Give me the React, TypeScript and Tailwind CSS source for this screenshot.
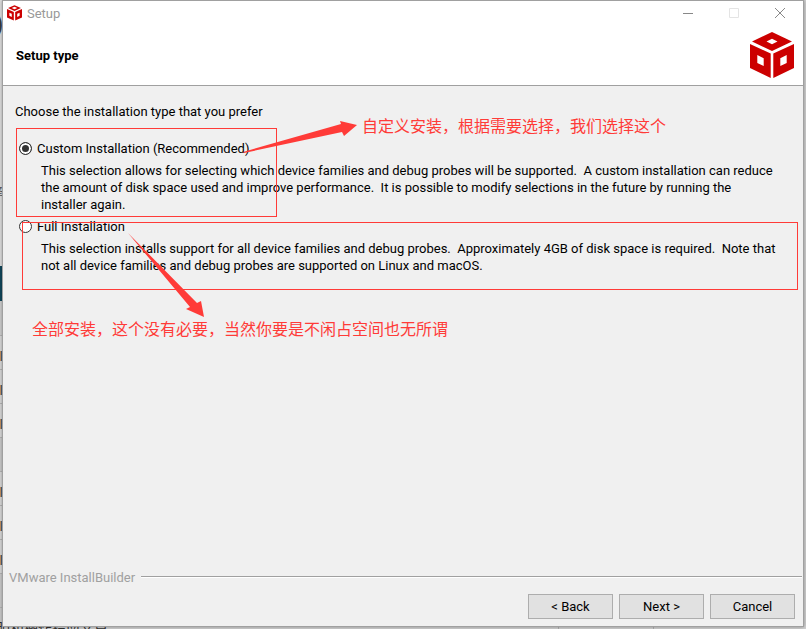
import { useState } from "react";
import type { ReactNode } from "react";

const backdropRows = [
  { top: "top-[335px]", text: true },
  { top: "top-[369px]", text: true },
  { top: "top-[403px]", text: true },
  { top: "top-[437px]", text: false },
  { top: "top-[471px]", text: true },
  { top: "top-[505px]", text: true },
  { top: "top-[539px]", text: true },
  { top: "top-[573px]", text: false },
  { top: "top-[607px]", text: false },
];

function CubeLogo({ className }: { className: string }) {
  return (
    <svg viewBox="0 0 44 46" className={className} aria-hidden="true">
      <path fill="#cc0000" fillRule="evenodd" d="M22 0 42 9.500 22 19 2 9.500ZM22 6.800 16.500 9.500 22 12.200 27.500 9.500Z" />
      <path fill="#cc0000" fillRule="evenodd" d="M0 12 20.700 21.500V46L0 36ZM7.300 23V31L13.700 34V26.300Z" />
      <path fill="#cc0000" fillRule="evenodd" d="M44 12 23.300 21.500V46L44 36ZM36.700 23V31L30.300 34V26.300Z" />
    </svg>
  );
}

function SmallCube() {
  return (
    <svg viewBox="0 0 44 46" className="h-4 w-[15px]" aria-hidden="true">
      <path fill="#cc0000" fillRule="evenodd" d="M22 0 41 8 22 17 3 8ZM22 5 14 8.500 22 12 30 8.500Z" />
      <path fill="#cc0000" fillRule="evenodd" d="M0 11 20 20V45L0 36ZM7 22V31L14 35V25Z" />
      <path fill="#cc0000" fillRule="evenodd" d="M44 11 24 20V45L44 36ZM37 22V31L30 35V25Z" />
    </svg>
  );
}

function Backdrop() {
  return (
    <div className="absolute inset-0 overflow-hidden bg-[#d2d2d2]" aria-hidden="true">
      <div className="absolute top-0 left-0 h-[266px] w-1 bg-[#e2e2e2]" />
      <span className="absolute -left-[5px] top-[4px] font-['Noto_Sans'] text-[26px] leading-9 text-[#3b3b3b]">)</span>
      <span className="absolute -left-[9px] top-[184px] font-['Noto_Sans_CJK_SC'] text-[12px] leading-4 text-[#555555]">
        择
      </span>
      <div className="absolute top-[266px] left-0 h-[35px] w-1 bg-[#11485c]" />
      {backdropRows.map((row) => (
        <div
          key={row.top}
          className={`absolute left-0 h-[34px] w-1 border-t border-[#b8b8b8] ${row.text ? "bg-[#dddddd]" : "bg-[#cecece]"} ${row.top}`}
        >
          {row.text && <div className="mt-[15px] h-[10px] w-[2px] border-l border-[#c99462] bg-[#50647c]" />}
        </div>
      ))}
      <span className="absolute left-[-4px] top-[617px] whitespace-nowrap font-['Noto_Sans_CJK_SC'] text-[14px] leading-5 text-[#333333]">
        明和操作指南文章
      </span>
      <div className="absolute bottom-0 left-[558px] h-1 w-px bg-[#b0b0b0]" />
      <div className="absolute bottom-0 left-[653px] h-1 w-px bg-[#b0b0b0]" />
    </div>
  );
}

function InstallOption(props: {
  id: string;
  label: string;
  checked: boolean;
  onSelect: () => void;
  children: ReactNode;
}) {
  return (
    <div>
      <div className="flex items-center gap-[5px] pl-1">
        <input
          type="radio"
          name="setup-type"
          id={props.id}
          checked={props.checked}
          onChange={props.onSelect}
          className="size-[13px] shrink-0 appearance-none rounded-full border border-[#333333] bg-white checked:bg-[#333333] checked:shadow-[inset_0_0_0_2px_white]"
        />
        <label htmlFor={props.id}>{props.label}</label>
      </div>
      <p className="mt-[5px] whitespace-nowrap pl-[26px]">{props.children}</p>
    </div>
  );
}

function Annotations() {
  return (
    <div className="pointer-events-none absolute inset-0 font-['Noto_Sans_CJK_SC',sans-serif] text-[16px] leading-6 text-[#ff3b38]">
      <div className="absolute left-[13px] top-[42px] h-[89px] w-[261px] border border-[#ff3b38]" />
      <div className="absolute left-[19px] right-[5px] top-[136px] h-[68px] border border-[#ff3b38]" />
      <svg className="absolute left-0 top-0 h-[240px] w-[360px]" viewBox="3 86 360 240" fill="#ff3b38" aria-hidden="true">
        <path d="M243 152 341 124 340 121 357 125 344 136 342 132 244 153Z" />
        <path d="M128 233 197 303 201 301 204 317 186 309 190 307Z" />
      </svg>
      <p className="absolute left-[359px] top-[27px] whitespace-nowrap">自定义安装，根据需要选择，我们选择这个</p>
      <p className="absolute left-[29px] top-[230px] whitespace-nowrap">
        全部安装，这个没有必要，当然你要是不闲占空间也无所谓
      </p>
    </div>
  );
}

const actionButton = "h-[25px] w-[85px] border border-[#adadad] bg-[#e1e1e1] text-center leading-[17px]";
const captionButton = "flex h-6 w-[46px] items-center justify-center";

export default function App() {
  const [choice, setChoice] = useState("custom");
  return (
    <div className="relative min-h-screen pr-[2px] pb-[2px] pl-[2px] font-['Roboto','Noto_Sans_CJK_SC',sans-serif] text-[13px] leading-[17px] text-black">
      <Backdrop />
      <main className="relative flex min-h-[calc(100vh-2px)] flex-col border border-[#a0a0a0] bg-[#f0f0f0] shadow-[0_0_4px_rgba(0,0,0,0.35)]">
        <header className="border-b border-[#a0a0a0] bg-white">
          <div className="flex h-6 items-center pl-1">
            <SmallCube />
            <span className="ml-[5px] text-[#999999]">Setup</span>
            <div className="ml-auto flex">
              <button type="button" aria-label="Minimize" className={captionButton}>
                <svg className="size-3" viewBox="0 0 12 12" aria-hidden="true">
                  <path d="M1 6.500H11" stroke="#888888" />
                </svg>
              </button>
              <button type="button" aria-label="Maximize" disabled className={captionButton}>
                <svg className="size-3" viewBox="0 0 12 12" aria-hidden="true">
                  <path d="M1.500 1.500H10.500V10.500H1.500Z" fill="none" stroke="#e4e4e4" />
                </svg>
              </button>
              <button type="button" aria-label="Close" className={captionButton}>
                <svg className="size-3" viewBox="0 0 12 12" aria-hidden="true">
                  <path d="M1 1 11 11M11 1 1 11" stroke="#888888" />
                </svg>
              </button>
            </div>
          </div>
          <div className="flex h-[60px] items-center justify-between pr-[9px] pl-[13px]">
            <h1 className="font-bold">Setup type</h1>
            <CubeLogo className="h-[46px] w-[44px]" />
          </div>
        </header>
        <section className="relative grow pt-[17px] pl-3">
          <h2>Choose the installation type that you prefer</h2>
          <div className="mt-5 flex flex-col gap-[5px]">
            <InstallOption
              id="custom"
              label="Custom Installation (Recommended)"
              checked={choice === "custom"}
              onSelect={() => setChoice("custom")}
            >
              This selection allows for selecting which device families and debug probes will be supported.&nbsp; A
              custom installation can reduce
              <br />
              the amount of disk space used and improve performance.&nbsp; It is possible to modify selections in the
              future by running the
              <br />
              installer again.
            </InstallOption>
            <InstallOption
              id="full"
              label="Full Installation"
              checked={choice === "full"}
              onSelect={() => setChoice("full")}
            >
              This selection installs support for all device families and debug probes.&nbsp; Approximately 4GB of disk
              space is required.&nbsp; Note that
              <br />
              not all device families and debug probes are supported on Linux and macOS.
            </InstallOption>
          </div>
          <Annotations />
        </section>
        <footer className="pb-[7px] pl-[6px]">
          <div className="flex items-center gap-[6px] pr-px text-[#a0a0a0]">
            <span>VMware InstallBuilder</span>
            <div className="h-[3px] grow border-y border-t-[#a0a0a0] border-b-[#f0f0f0] bg-white" />
          </div>
          <div className="mt-2 flex justify-end gap-[6px] pr-2">
            <button type="button" className={actionButton}>
              &lt; Back
            </button>
            <button type="button" className={actionButton}>
              Next &gt;
            </button>
            <button type="button" className={actionButton}>
              Cancel
            </button>
          </div>
        </footer>
      </main>
    </div>
  );
}
